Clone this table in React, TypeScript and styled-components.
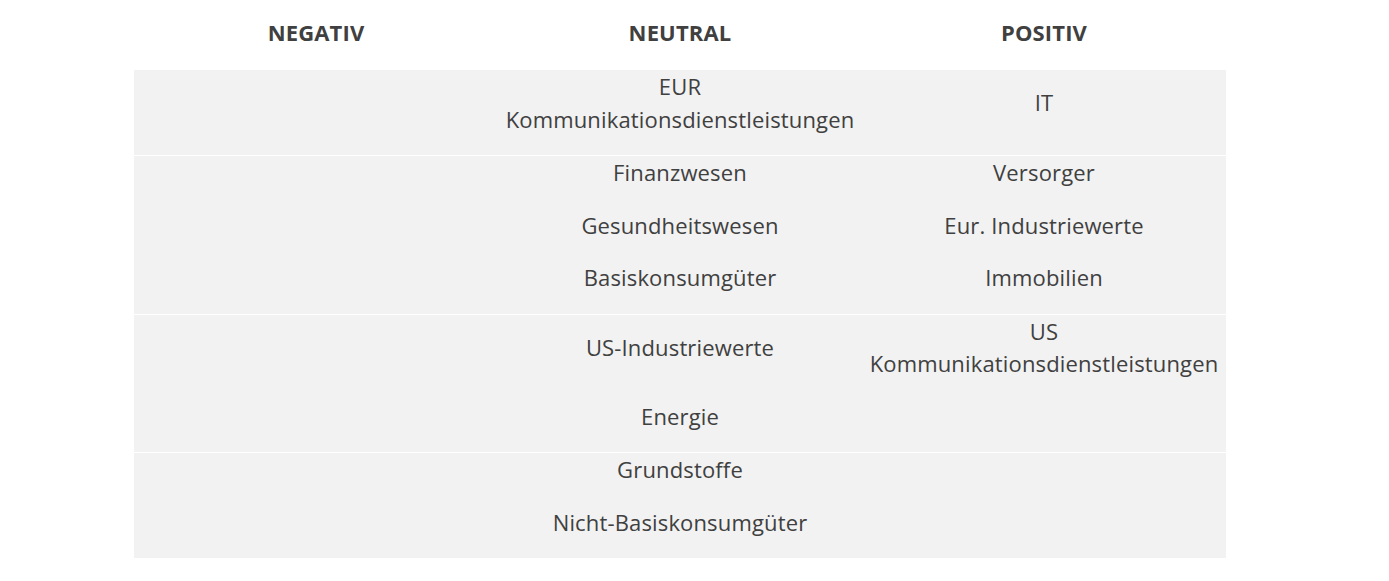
import React from "react";
import styled, { createGlobalStyle } from "styled-components";

const Global = createGlobalStyle`
  html, body { margin: 0; padding: 0; background: #ffffff; }
  body { font-family: "Open Sans", "Noto Sans", sans-serif; color: #404040; }
`;

const Page = styled.div`
  padding-left: 134px;
`;

const Table = styled.div`
  width: 1092px;
  display: flex;
  flex-direction: column;
`;

const Grid = styled.div`
  display: grid;
  grid-template-columns: repeat(3, 1fr);
`;

const HeaderRow = styled(Grid)`
  height: 70px;
`;

const HeaderCell = styled.div`
  font-size: 22px;
  letter-spacing: 0.15px;
  font-weight: 700;
  line-height: 32.5px;
  padding-top: 16px;
  text-align: center;
`;

const Category = styled(Grid)<{ $last?: boolean }>`
  background: #f2f2f2;
  border-bottom: ${(p) => (p.$last ? "0" : "1px solid #ffffff")};
`;

const Cell = styled.div`
  font-size: 22px;
  letter-spacing: 0.15px;
  line-height: 32.5px;
  padding-bottom: 20px;
  display: flex;
  align-items: center;
  justify-content: center;
  text-align: center;
`;

const Lines = styled.div`
  display: flex;
  flex-direction: column;
`;

type Row = { neg: string[][]; neu: string[][]; pos: string[][] };

const rows: Row[] = [
  { neg: [], neu: [["EUR", "Kommunikationsdienstleistungen"]], pos: [["IT"]] },
  {
    neg: [],
    neu: [["Finanzwesen"], ["Gesundheitswesen"], ["Basiskonsumgüter"]],
    pos: [["Versorger"], ["Eur. Industriewerte"], ["Immobilien"]],
  },
  {
    neg: [],
    neu: [["US-Industriewerte"], ["Energie"]],
    pos: [["US", "Kommunikationsdienstleistungen"]],
  },
  { neg: [], neu: [["Grundstoffe"], ["Nicht-Basiskonsumgüter"]], pos: [] },
];

const renderCell = (item: string[] | undefined, key: string) => (
  <Cell key={key}>
    {item ? (
      <Lines>
        {item.map((l, i) => (
          <span key={i}>{l}</span>
        ))}
      </Lines>
    ) : null}
  </Cell>
);

export default function App() {
  return (
    <Page>
      <Global />
      <Table>
        <HeaderRow>
          <HeaderCell>NEGATIV</HeaderCell>
          <HeaderCell>NEUTRAL</HeaderCell>
          <HeaderCell>POSITIV</HeaderCell>
        </HeaderRow>
        {rows.map((r, ri) => {
          const n = Math.max(r.neg.length, r.neu.length, r.pos.length);
          const cells: React.ReactNode[] = [];
          for (let i = 0; i < n; i++) {
            cells.push(renderCell(r.neg[i], `n${i}`));
            cells.push(renderCell(r.neu[i], `u${i}`));
            cells.push(renderCell(r.pos[i], `p${i}`));
          }
          return (
            <Category key={ri} $last={ri === rows.length - 1}>
              {cells}
            </Category>
          );
        })}
      </Table>
    </Page>
  );
}
